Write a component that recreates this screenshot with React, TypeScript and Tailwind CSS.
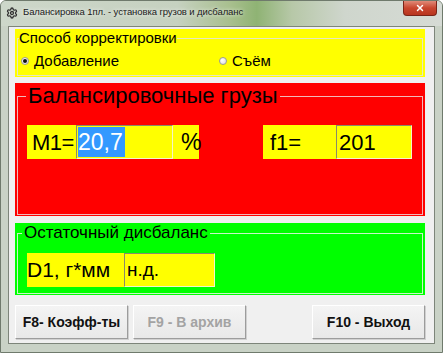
import { Settings, X } from "lucide-react";

const font = { fontFamily: '"Liberation Sans", Arial, sans-serif' };

function Radio({ checked }: { checked?: boolean }) {
  return (
    <span className="flex h-[8px] w-[8px] items-center justify-center rounded-full border border-[#9a9a9a] bg-[radial-gradient(circle_at_35%_35%,#ffffff,#d8d8d8)]">
      {checked ? <span className="h-[4px] w-[4px] rounded-full bg-[#111]" /> : null}
    </span>
  );
}

function Field({ children, className }: { children: React.ReactNode; className?: string }) {
  return (
    <div
      className={
        "flex h-full items-center overflow-hidden whitespace-nowrap border-t border-l border-[#8a8a6a] border-r-[#f4f4c8] border-b-[#f4f4c8] border-r border-b bg-[#ffff00] " +
        (className ?? "")
      }
    >
      {children}
    </div>
  );
}

function WinButton({ children, disabled }: { children: React.ReactNode; disabled?: boolean }) {
  return (
    <button
      className={
        "flex h-[34px] w-[113px] items-center justify-center border border-t-white border-l-white border-r-[#9c9c9c] border-b-[#9c9c9c] bg-[linear-gradient(180deg,#f4f4f4,#e8e8e8)] text-[14px] font-bold shadow-[1px_1px_0_#d0d0d0] " +
        (disabled ? "text-[#a3a3a3]" : "text-[#111]")
      }
    >
      {children}
    </button>
  );
}

export default function App() {
  return (
    <div
      className="flex h-[353px] w-[443px] flex-col overflow-hidden rounded-t-[6px] border border-[#6f7a6c] bg-[#c9d2c6]"
      style={font}
    >
      {/* title bar */}
      <div className="flex h-[25px] shrink-0 items-start bg-[linear-gradient(90deg,#cdd7ca_0%,#c6d1c0_40%,#a8bf8e_52%,#8fb374_58%,#b7c8a8_66%,#cfd6cd_78%,#d6dbd5_100%)]">
        <div className="flex h-[23px] items-center pl-[5px]">
          <Settings size={12} strokeWidth={2.6} className="text-[#333]" />
          <span className="ml-[5px] text-[9.5px] tracking-[-0.1px] text-[#1a1a1a] [text-shadow:0_0_4px_#fff]">
            Балансировка 1пл. - установка грузов и дисбаланс
          </span>
        </div>
        <div className="ml-auto mr-[5px] flex h-[15px] w-[34px] items-center justify-center rounded-b-[4px] border border-t-0 border-[#7a2418] bg-[linear-gradient(180deg,#e08a78,#c9462f_50%,#b8351f)]">
          <X size={10} strokeWidth={3.5} className="text-white" />
        </div>
      </div>

      {/* client area */}
      <div className="mx-[7px] mb-[8px] flex flex-1 flex-col border border-[#7d857a] bg-[#f0f0f0] pt-[2px] pl-[6px] pr-[9px]">
        {/* correction method */}
        <div className="h-[48px] bg-[#ffff00] px-[2px] pb-[1px]">
          <fieldset className="h-full border border-[#e6e6c0]">
            <legend className="ml-[1px] text-[15px] leading-[18px] text-black">Способ корректировки</legend>
            <div className="mt-[5px] flex h-[18px] items-center text-[15px] text-black">
              <div className="flex w-[201px] items-center gap-[5px] pl-[3px]">
                <Radio checked />
                <span>Добавление</span>
              </div>
              <div className="flex items-center gap-[5px]">
                <Radio />
                <span>Съём</span>
              </div>
            </div>
          </fieldset>
        </div>

        {/* balancing weights */}
        <div className="mt-[6px] h-[133px] bg-[#ff0000] px-[2px] pb-[1px]">
          <fieldset className="h-full border border-[#f2b8b8]">
            <legend className="ml-[8px] px-[2px] text-[22px] leading-[26px] text-black">Балансировочные грузы</legend>
            <div className="ml-[9px] mt-[16px] flex h-[34px] items-stretch text-[23px] text-black">
              <div className="flex w-[49px] shrink-0 items-center whitespace-nowrap bg-[#ffff00] pl-[5px] text-[22px] tracking-[-0.5px]">M1=</div>
              <Field className="w-[97px] pl-[1px]">
                <span className="flex h-[30px] items-center bg-[#3399ff] pr-[2px] text-white">20,7</span>
              </Field>
              <div className="flex w-[26px] items-center bg-[#ffff00] pl-[8px]">%</div>
              <div className="ml-[64px] flex w-[73px] items-center bg-[#ffff00] pl-[7px] text-[22px]">f1=</div>
              <Field className="w-[76px] pl-[2px] text-[22px]">201</Field>
            </div>
          </fieldset>
        </div>

        {/* residual imbalance */}
        <div className="mt-[7px] h-[72px] bg-[#00ff00] px-[2px] pb-[1px]">
          <fieldset className="h-full border border-[#c8f5c8]">
            <legend className="ml-[4px] px-[2px] text-[17px] leading-[20px] text-black">Остаточный дисбаланс</legend>
            <div className="ml-[9px] mt-[10px] flex h-[34px] items-stretch text-black">
              <div className="flex w-[97px] items-center whitespace-nowrap bg-[#ffff00] text-[21px]">D1, г*мм</div>
              <Field className="w-[91px] pl-[2px] text-[19px]">н.д.</Field>
            </div>
          </fieldset>
        </div>

        {/* buttons */}
        <div className="mt-[10px] flex gap-[5px]">
          <WinButton>F8- Коэфф-ты</WinButton>
          <WinButton disabled>F9 - В архив</WinButton>
          <div className="ml-auto">
            <WinButton>F10 - Выход</WinButton>
          </div>
        </div>
      </div>
    </div>
  );
}
